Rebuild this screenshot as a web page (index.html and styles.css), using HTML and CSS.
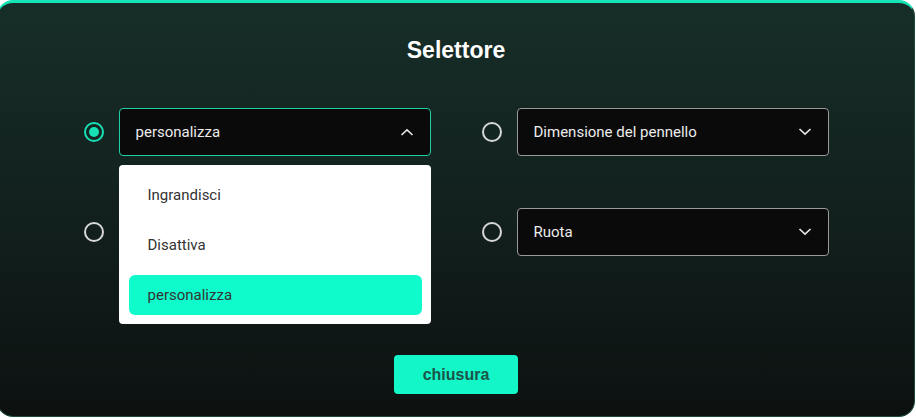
FILE: index.html
```html
<!DOCTYPE html>
<html lang="it">
<head>
<meta charset="utf-8">
<title>Selettore</title>
<link rel="stylesheet" href="styles.css">
</head>
<body>
<div class="card">
  <h1 class="title">Selettore</h1>
  <div class="grid">
    <div class="field">
      <span class="radio checked"></span>
      <div class="select-wrap">
        <div class="select open">
          <span class="value">personalizza</span>
          <svg class="chev" width="14" height="8" viewBox="0 0 14 8"><path d="M1.5 7 L7 1.8 L12.5 7" fill="none" stroke="#e8e8e8" stroke-width="1.6"/></svg>
        </div>
        <ul class="menu">
          <li class="item">Ingrandisci</li>
          <li class="item">Disattiva</li>
          <li class="item active">personalizza</li>
        </ul>
      </div>
    </div>
    <div class="field">
      <span class="radio"></span>
      <div class="select-wrap">
        <div class="select">
          <span class="value">Dimensione del pennello</span>
          <svg class="chev" width="14" height="8" viewBox="0 0 14 8"><path d="M1.5 1 L7 6.2 L12.5 1" fill="none" stroke="#e8e8e8" stroke-width="1.6"/></svg>
        </div>
      </div>
    </div>
    <div class="field">
      <span class="radio"></span>
      <div class="select-wrap">
        <div class="select" aria-label="Ingrandisci">
          <span class="value"></span>
          <svg class="chev" width="14" height="8" viewBox="0 0 14 8"><path d="M1.5 1 L7 6.2 L12.5 1" fill="none" stroke="#e8e8e8" stroke-width="1.6"/></svg>
        </div>
      </div>
    </div>
    <div class="field">
      <span class="radio"></span>
      <div class="select-wrap">
        <div class="select">
          <span class="value">Ruota</span>
          <svg class="chev" width="14" height="8" viewBox="0 0 14 8"><path d="M1.5 1 L7 6.2 L12.5 1" fill="none" stroke="#e8e8e8" stroke-width="1.6"/></svg>
        </div>
      </div>
    </div>
  </div>
  <div class="actions">
    <button class="btn">chiusura</button>
  </div>
</div>
</body>
</html>
```

FILE: styles.css
```css
* { box-sizing: border-box; }
html, body { margin: 0; padding: 0; }
body {
  background: #ffffff;
  width: 916px;
  height: 418px;
  overflow: hidden;
  font-family: Roboto, "Liberation Sans", sans-serif;
}
.card {
  margin-left: -3px;
  width: 918px;
  height: 417px;
  border: 1px solid #1d4a3f;
  border-top: 3px solid #16e4b6;
  border-radius: 16px;
  background: linear-gradient(180deg, #172e28 0%, #13221f 45%, #0c1110 100%);
  padding-top: 33px;
  display: flex;
  flex-direction: column;
  align-items: center;
}
.title {
  margin: 0;
  font-family: "Liberation Sans", Arial, sans-serif;
  font-weight: bold;
  font-size: 23px;
  line-height: 28px;
  color: #ffffff;
}
.grid {
  margin-top: 44px;
  margin-left: 0;
  display: grid;
  grid-template-columns: 347px 347px;
  column-gap: 51px;
  row-gap: 52px;
}
.field {
  display: flex;
  align-items: center;
  gap: 15px;
}
.radio {
  width: 20px;
  height: 20px;
  border-radius: 50%;
  border: 2px solid #d8d8d8;
  flex: none;
  display: flex;
  align-items: center;
  justify-content: center;
}
.radio.checked {
  border-color: #16e0b4;
}
.radio.checked::after {
  content: "";
  width: 10px;
  height: 10px;
  border-radius: 50%;
  background: #16e0b4;
}
.select-wrap {
  position: relative;
  flex: 1;
}
.select {
  height: 48px;
  background: #0a0a0a;
  border: 1px solid #9a9a9a;
  border-radius: 4px;
  display: flex;
  align-items: center;
  justify-content: space-between;
  padding: 0 16px 0 16px;
  color: #ececec;
  font-size: 15px;
}
.select.open {
  border-color: #1fd0a6;
}
.chev { flex: none; }
.menu {
  position: absolute;
  top: 57px;
  left: 0;
  right: 0;
  margin: 0;
  list-style: none;
  background: #ffffff;
  border-radius: 4px;
  padding: 10px 9px 9px 10px;
  display: flex;
  flex-direction: column;
  gap: 10px;
  z-index: 2;
}
.item {
  height: 40px;
  display: flex;
  align-items: center;
  padding-left: 19px;
  color: #333333;
  font-size: 15px;
  border-radius: 6px;
}
.item.active {
  background: #10fbcb;
}
.actions {
  margin-top: 99px;
}
.btn {
  width: 124px;
  height: 39px;
  border: none;
  border-radius: 4px;
  background: #12f6c8;
  color: #1c5447;
  font-family: "Liberation Sans", Arial, sans-serif;
  font-weight: bold;
  font-size: 16px;
  cursor: pointer;
}
```
